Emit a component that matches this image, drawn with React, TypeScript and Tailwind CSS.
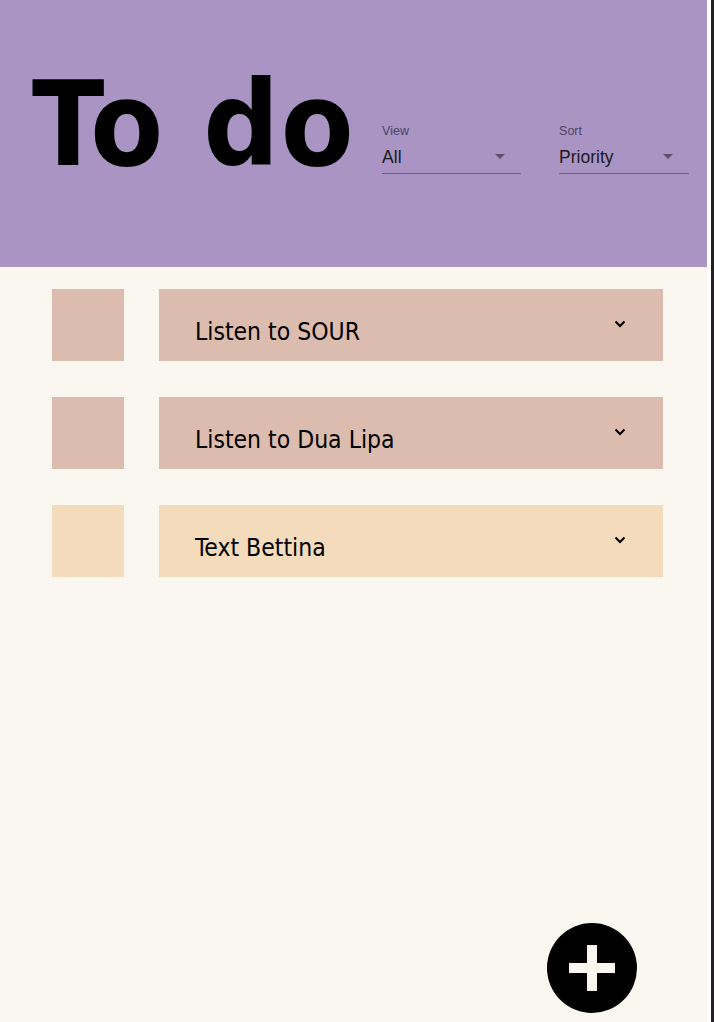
import { useState } from 'react';

type Todo = { id: number; title: string; color: string };

const todos: Todo[] = [
  { id: 1, title: 'Listen to SOUR', color: 'bg-[#dcbcae]' },
  { id: 2, title: 'Listen to Dua Lipa', color: 'bg-[#dcbcae]' },
  { id: 3, title: 'Text Bettina', color: 'bg-[#f3dbbb]' },
];

const ArrowDrop = () => (
  <svg width="10" height="5" viewBox="0 0 10 5" className="shrink-0">
    <path d="M0 0 L10 0 L5 5 Z" fill="rgba(0,0,0,0.45)" />
  </svg>
);

const Select = ({ label, value, width }: { label: string; value: string; width: string }) => (
  <div className={`flex flex-col ${width} font-['Liberation_Sans',Arial,sans-serif]`}>
    <span className="text-[12.5px] leading-none text-[#4f4360]">{label}</span>
    <div className="flex items-center justify-between border-b border-[#6c5f7c] pt-[9px] pb-[6px] pr-[16px]">
      <span className="text-[17.5px] leading-[20px] text-[#1a1a1a]">{value}</span>
      <ArrowDrop />
    </div>
  </div>
);

const TodoRow = ({ todo }: { todo: Todo }) => (
  <li className="flex gap-[35px]">
    <div className={`w-[72px] h-[72px] ${todo.color}`} />
    <div
      className={`w-[504px] h-[72px] flex items-center justify-between pl-[36px] pr-[37px] ${todo.color}`}>
      <span className="mt-[14px] text-[24.5px] leading-none text-black font-['DejaVu_Sans_Condensed','DejaVu_Sans',sans-serif] font-stretch-condensed">
        {todo.title}
      </span>
      <svg width="12" height="8" viewBox="0 0 12 8" className="mb-[2px]">
        <polyline points="1.5,1.5 6,6 10.5,1.5" fill="none" stroke="black" strokeWidth="2" />
      </svg>
    </div>
  </li>
);

export default function App() {
  const [view] = useState('All');
  const [sort] = useState('Priority');

  return (
    <div className="flex min-h-[1022px] w-[714px] bg-white">
      <main className="relative flex flex-col w-[707px] bg-[#faf7f0]">
        <header className="flex items-center h-[267px] bg-[#aa94c4] pl-[32px]">
          <h1 className="mb-[20px] text-[118px] leading-none font-bold text-black tracking-[1.5px] font-['DejaVu_Sans_Condensed','DejaVu_Sans',sans-serif] font-stretch-condensed">
            To do
          </h1>
          <div className="flex gap-[38px] ml-[27px] mt-[32px]">
            <Select label="View" value={view} width="w-[139px]" />
            <Select label="Sort" value={sort} width="w-[130px]" />
          </div>
        </header>
        <ul className="flex flex-col gap-[36px] pt-[22px] pl-[52px]">
          {todos.map((todo) => (
            <TodoRow key={todo.id} todo={todo} />
          ))}
        </ul>
        <button className="absolute bottom-[9px] right-[70px] w-[90px] h-[90px] rounded-full bg-black flex items-center justify-center">
          <svg width="46" height="46" viewBox="0 0 46 46">
            <rect x="18" y="0" width="10" height="46" fill="#faf7f0" />
            <rect x="0" y="18" width="46" height="10" fill="#faf7f0" />
          </svg>
        </button>
      </main>
      <div className="w-[4px] bg-white" />
      <div className="w-[3px] bg-[#222222]" />
    </div>
  );
}
